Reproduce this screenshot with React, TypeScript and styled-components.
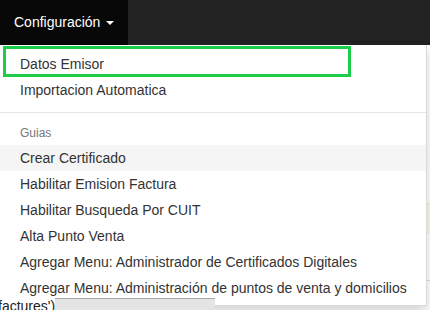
import styled, { createGlobalStyle } from "styled-components"

const Global = createGlobalStyle`
  body {
    margin: 0;
    font-family: "Liberation Sans", Arial, sans-serif;
    font-size: 14px;
    color: #333;
    background: #fff;
  }
`

const Page = styled.div`
  position: relative;
  width: 430px;
  height: 310px;
  overflow: hidden;
`

const Navbar = styled.nav`
  height: 45px;
  background: #222;
  display: flex;
`

const NavToggle = styled.a`
  display: flex;
  align-items: center;
  gap: 6px;
  width: 128px;
  box-sizing: border-box;
  padding: 0 0 2px 14px;
  background: #080808;
  color: #fff;
  font-size: 14px;
  cursor: pointer;
`

const Caret = styled.span`
  margin-top: 2px;
  border-top: 4px solid #fff;
  border-left: 4px solid transparent;
  border-right: 4px solid transparent;
`

const Content = styled.main`
  display: flex;
  flex-direction: column;
  padding: 158px 0 0;
`

const Alert = styled.div`
  height: 30px;
  background: #fcf8e3;
  border-top: 1px solid #faebcc;
`

const TableRow = styled.div`
  height: 46px;
  border-bottom: 1px solid #ddd;
`

const Menu = styled.ul`
  position: absolute;
  top: 45px;
  left: 0;
  width: 427px;
  box-sizing: border-box;
  margin: 0;
  padding: 6px 0 4px;
  list-style: none;
  background: #fff;
  border: 1px solid rgba(0, 0, 0, 0.15);
  border-top: none;
  border-left: none;
  box-shadow: 0 6px 12px rgba(0, 0, 0, 0.175);
`

const Item = styled.li<{ $hover?: boolean }>`
  padding: 3px 20px;
  line-height: 20px;
  white-space: nowrap;
  color: #333;
  background: ${(p) => (p.$hover ? "#f5f5f5" : "transparent")};
`

const Header = styled.li`
  padding: 3px 20px;
  line-height: 17px;
  font-size: 12px;
  color: #777;
`

const Divider = styled.li`
  height: 1px;
  margin: 9px 0;
  background: #e5e5e5;
`

const Highlight = styled.div`
  position: absolute;
  top: 1px;
  left: 3px;
  width: 348px;
  height: 31px;
  box-sizing: border-box;
  border: 3px solid #1ccd4a;
  pointer-events: none;
`

const Overlay = styled.div`
  position: absolute;
  top: 298px;
  left: 0;
  display: flex;
  height: 12px;
  background: #fff;
`

const CodeText = styled.span`
  margin-left: -2px;
  line-height: 16px;
  font-size: 14px;
  color: #222;
`

const ScrollBar = styled.span`
  width: 160px;
  background: #e4e4e4;
  border-top: 1px solid #a8a8a8;
`

const items = [
  "Habilitar Emision Factura",
  "Habilitar Busqueda Por CUIT",
  "Alta Punto Venta",
  "Agregar Menu: Administrador de Certificados Digitales",
  "Agregar Menu: Administración de puntos de venta y domicilios",
]

export default function App() {
  return (
    <Page>
      <Global />
      <Navbar>
        <NavToggle>
          Configuración <Caret />
        </NavToggle>
      </Navbar>
      <Content>
        <Alert />
        <TableRow />
        <TableRow />
      </Content>
      <Menu>
        <Highlight />
        <Item>Datos Emisor</Item>
        <Item>Importacion Automatica</Item>
        <Divider />
        <Header>Guias</Header>
        <Item $hover>Crear Certificado</Item>
        {items.map((t) => (
          <Item key={t}>{t}</Item>
        ))}
      </Menu>
      <Overlay>
        <CodeText>factures')</CodeText>
        <ScrollBar />
      </Overlay>
    </Page>
  )
}
